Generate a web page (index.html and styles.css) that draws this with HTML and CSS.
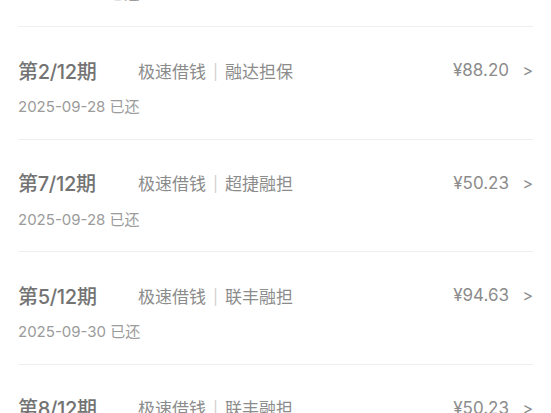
FILE: index.html
```html
<!DOCTYPE html>
<html lang="zh-CN">
<head>
<meta charset="utf-8">
<title>还款记录</title>
<link rel="stylesheet" href="styles.css">
</head>
<body>
<div class="list">
  <div class="item">
    <div class="row">
      <span class="term">第1/12期</span>
      <span class="product">极速借钱<span class="sep">|</span>融达担保</span>
      <span class="amount">¥88.20</span>
      <span class="arrow">&gt;</span>
    </div>
    <div class="date">2025-09-28 已还</div>
  </div>
  <div class="item">
    <div class="row">
      <span class="term">第2/12期</span>
      <span class="product">极速借钱<span class="sep">|</span>融达担保</span>
      <span class="amount">¥88.20</span>
      <span class="arrow">&gt;</span>
    </div>
    <div class="date">2025-09-28 已还</div>
  </div>
  <div class="item">
    <div class="row">
      <span class="term">第7/12期</span>
      <span class="product">极速借钱<span class="sep">|</span>超捷融担</span>
      <span class="amount">¥50.23</span>
      <span class="arrow">&gt;</span>
    </div>
    <div class="date">2025-09-28 已还</div>
  </div>
  <div class="item">
    <div class="row">
      <span class="term">第5/12期</span>
      <span class="product">极速借钱<span class="sep">|</span>联丰融担</span>
      <span class="amount">¥94.63</span>
      <span class="arrow">&gt;</span>
    </div>
    <div class="date">2025-09-30 已还</div>
  </div>
  <div class="item">
    <div class="row">
      <span class="term">第8/12期</span>
      <span class="product">极速借钱<span class="sep">|</span>联丰融担</span>
      <span class="amount">¥50.23</span>
      <span class="arrow">&gt;</span>
    </div>
    <div class="date">2025-10-28 已还</div>
  </div>
</div>
</body>
</html>
```
FILE: styles.css
```css
html, body {
  margin: 0;
  padding: 0;
  height: 413px;
  overflow: hidden;
  background: #ffffff;
}
body {
  font-family: "Inter", "Noto Sans CJK SC", sans-serif;
}
.list {
  margin: -85.67px 18px 0 18px;
}
.item {
  padding: 31px 0 21.67px 0;
  border-bottom: 1px solid #efefef;
}
.row {
  display: flex;
  align-items: center;
  height: 24px;
}
.term {
  width: 120px;
  flex: none;
  font-size: 20px;
  font-weight: 500;
  color: #737373;
  letter-spacing: -0.3px;
}
.product {
  flex: 1;
  font-size: 17px;
  color: #8c8c8c;
}
.sep {
  color: #d0d0d0;
  font-size: 15px;
  margin: 0 7px;
  position: relative;
  top: -1px;
}
.amount {
  font-size: 17px;
  color: #8c8c8c;
  margin-right: 2px;
}
.arrow {
  width: 12px;
  margin-left: 10px;
  font-size: 16px;
  color: #8c8c8c;
  text-align: right;
}
.date {
  margin-top: 15px;
  height: 20px;
  line-height: 20px;
  font-size: 15px;
  color: #9b9b9b;
}
```
